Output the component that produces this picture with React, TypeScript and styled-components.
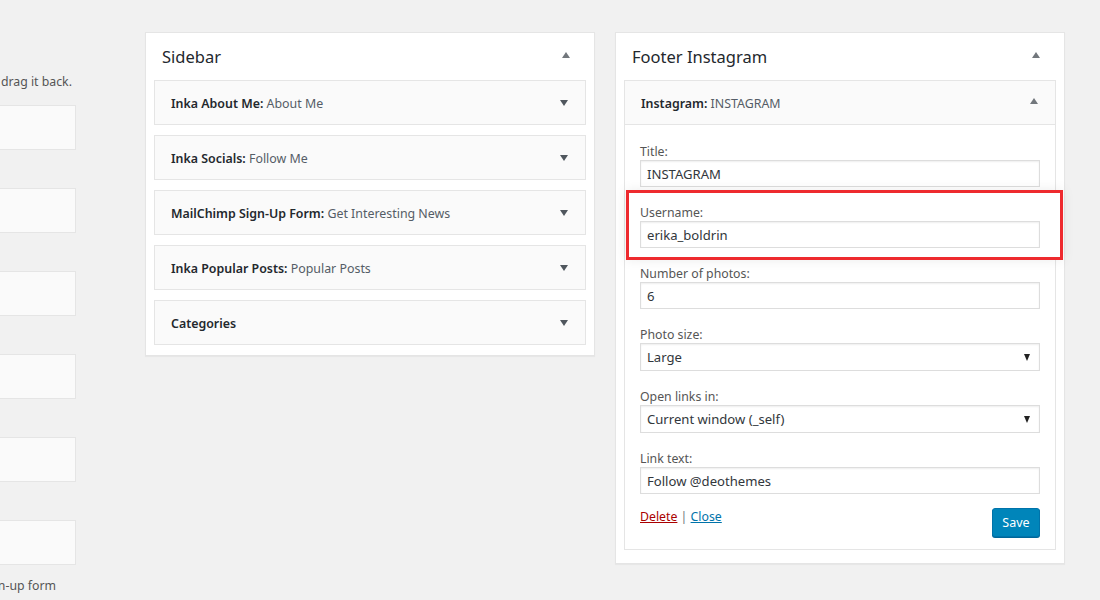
import React from "react";
import styled, { createGlobalStyle } from "styled-components";

const Global = createGlobalStyle`
  html, body { margin: 0; padding: 0; }
  body {
    background: #f1f1f1;
    font-family: "Noto Sans", "Open Sans", sans-serif;
    font-size: 13px;
    color: #444;
    overflow: hidden;
  }
  * { box-sizing: border-box; }
`;

const Page = styled.div`
  display: flex;
  align-items: flex-start;
  width: 1100px;
  height: 600px;
  overflow: hidden;
`;

const LeftCol = styled.div`
  width: 77px;
  flex: none;
  overflow: hidden;
  display: flex;
  flex-direction: column;
  padding-top: 74px;
`;

const ClipLine = styled.div<{ $pr: number; $mt?: number }>`
  display: flex;
  justify-content: flex-end;
  white-space: nowrap;
  padding-right: ${(p) => p.$pr}px;
  margin-top: ${(p) => p.$mt ?? 0}px;
  line-height: 16px;
  font-size: 12.3px;
  color: #555;
  overflow: hidden;
`;

const InactiveBox = styled.div`
  height: 45px;
  margin-right: 1px;
  margin-left: -10px;
  background: #fafafa;
  border: 1px solid #e5e5e5;
  margin-bottom: 38px;
  &:nth-child(2) { margin-top: 15px; }
`;

const Columns = styled.div`
  display: flex;
  align-items: flex-start;
  gap: 20px;
  margin-left: 68px;
  padding-top: 32px;
`;

const Panel = styled.div<{ $pb?: number }>`
  width: 450px;
  background: #fff;
  border: 1px solid #e5e5e5;
  box-shadow: 0 1px 1px rgba(0, 0, 0, 0.04);
  padding: 0 8px ${(p) => p.$pb ?? 10}px;
`;

const PanelHead = styled.div`
  height: 47px;
  display: flex;
  align-items: center;
  justify-content: space-between;
  padding: 0 16px 0 8px;
`;

const PanelTitle = styled.h2`
  margin: 0;
  font-size: 16.5px;
  font-weight: 400;
  color: #23282d;
`;

const Arrow = styled.span<{ $up?: boolean }>`
  width: 0;
  height: 0;
  border-left: 4px solid transparent;
  border-right: 4px solid transparent;
  ${(p) =>
    p.$up
      ? "border-bottom: 6px solid #72777c;"
      : "border-top: 6px solid #50575e;"}
  ${(p) => (p.$up ? "margin-top: -4px;" : "")}
`;

const WidgetList = styled.div`
  display: flex;
  flex-direction: column;
  gap: 10px;
`;

const Widget = styled.div`
  border: 1px solid #e5e5e5;
  background: #fafafa;
`;

const WidgetTop = styled.div`
  height: 43px;
  display: flex;
  align-items: center;
  justify-content: space-between;
  padding: 1px 17px 0 16px;
`;

const WTitle = styled.div`
  font-size: 12.4px;
  font-weight: 600;
  color: #23282d;
`;

const WSub = styled.span`
  font-weight: 400;
  color: #555d66;
`;

const WidgetBody = styled.div`
  background: #fff;
  border-top: 1px solid #e5e5e5;
  padding: 18px 15px 12px;
`;

const Field = styled.div<{ $hl?: boolean }>`
  position: relative;
  margin-bottom: 17px;
  ${(p) =>
    p.$hl
      ? `
    &::before {
      content: "";
      position: absolute;
      top: -14px;
      left: -14px;
      right: -23px;
      bottom: -12px;
      background: #fff;
      border: 3px solid #ee2a2f;
      box-shadow: 0 0 12px rgba(0,0,0,0.08);
    }
    & > * { position: relative; }
  `
      : ""}
`;

const Label = styled.label`
  display: block;
  line-height: 17px;
  font-size: 12.3px;
  color: #555;
`;

const Input = styled.div<{ $select?: boolean }>`
  height: ${(p) => (p.$select ? 28 : 27)}px;
  border: 1px solid #ddd;
  box-shadow: inset 0 1px 2px rgba(0, 0, 0, 0.07);
  background: #fff;
  padding: 0 6px;
  display: flex;
  align-items: center;
  justify-content: space-between;
  font-size: 13.1px;
  color: #32373c;
`;

const SelectArrow = styled.span`
  width: 0;
  height: 0;
  border-left: 3.5px solid transparent;
  border-right: 3.5px solid transparent;
  border-top: 7px solid #222;
  margin-right: 3px;
`;

const Actions = styled.div`
  display: flex;
  justify-content: space-between;
  align-items: flex-start;
  margin-top: -3px;
`;

const Links = styled.div`
  font-size: 12.3px;
  color: #72777c;
  line-height: 16px;
  padding-top: 1px;
`;

const Lnk = styled.a<{ $red?: boolean }>`
  color: ${(p) => (p.$red ? "#a00" : "#0073aa")};
  text-decoration: underline;
`;

const SaveBtn = styled.button`
  width: 48px;
  height: 29px;
  background: #0085ba;
  border: 1px solid #0073aa;
  border-radius: 3px;
  box-shadow: 0 1px 0 #006799;
  color: #fff;
  font-family: inherit;
  font-size: 12.5px;
  padding: 0;
`;

const sidebarWidgets: [string, string][] = [
  ["Inka About Me", "About Me"],
  ["Inka Socials", "Follow Me"],
  ["MailChimp Sign-Up Form", "Get Interesting News"],
  ["Inka Popular Posts", "Popular Posts"],
  ["Categories", ""],
];

const fields: { label: string; value: string; select?: boolean; hl?: boolean }[] = [
  { label: "Title:", value: "INSTAGRAM" },
  { label: "Username:", value: "erika_boldrin", hl: true },
  { label: "Number of photos:", value: "6" },
  { label: "Photo size:", value: "Large", select: true },
  { label: "Open links in:", value: "Current window (_self)", select: true },
  { label: "Link text:", value: "Follow @deothemes" },
];

export default function App() {
  return (
    <>
      <Global />
      <Page>
        <LeftCol>
          <ClipLine $pr={5}>
            To deactivate a widget and delete its settings, drag it back.
          </ClipLine>
          {Array.from({ length: 6 }).map((_, i) => (
            <InactiveBox key={i} />
          ))}
          <ClipLine $pr={21} $mt={-25}>
            A MailChimp sign-up form
          </ClipLine>
        </LeftCol>
        <Columns>
          <Panel>
            <PanelHead>
              <PanelTitle>Sidebar</PanelTitle>
              <Arrow $up />
            </PanelHead>
            <WidgetList>
              {sidebarWidgets.map(([a, b]) => (
                <Widget key={a}>
                  <WidgetTop>
                    <WTitle>
                      {a}
                      {b && (
                        <>
                          : <WSub>{b}</WSub>
                        </>
                      )}
                    </WTitle>
                    <Arrow />
                  </WidgetTop>
                </Widget>
              ))}
            </WidgetList>
          </Panel>
          <Panel $pb={13}>
            <PanelHead>
              <PanelTitle>Footer Instagram</PanelTitle>
              <Arrow $up />
            </PanelHead>
            <Widget>
              <WidgetTop>
                <WTitle>
                  Instagram: <WSub>INSTAGRAM</WSub>
                </WTitle>
                <Arrow $up />
              </WidgetTop>
              <WidgetBody>
                {fields.map((f) => (
                  <Field key={f.label} $hl={f.hl}>
                    <Label>{f.label}</Label>
                    <Input $select={f.select}>
                      <span>{f.value}</span>
                      {f.select && <SelectArrow />}
                    </Input>
                  </Field>
                ))}
                <Actions>
                  <Links>
                    <Lnk $red>Delete</Lnk> | <Lnk>Close</Lnk>
                  </Links>
                  <SaveBtn>Save</SaveBtn>
                </Actions>
              </WidgetBody>
            </Widget>
          </Panel>
        </Columns>
      </Page>
    </>
  );
}
